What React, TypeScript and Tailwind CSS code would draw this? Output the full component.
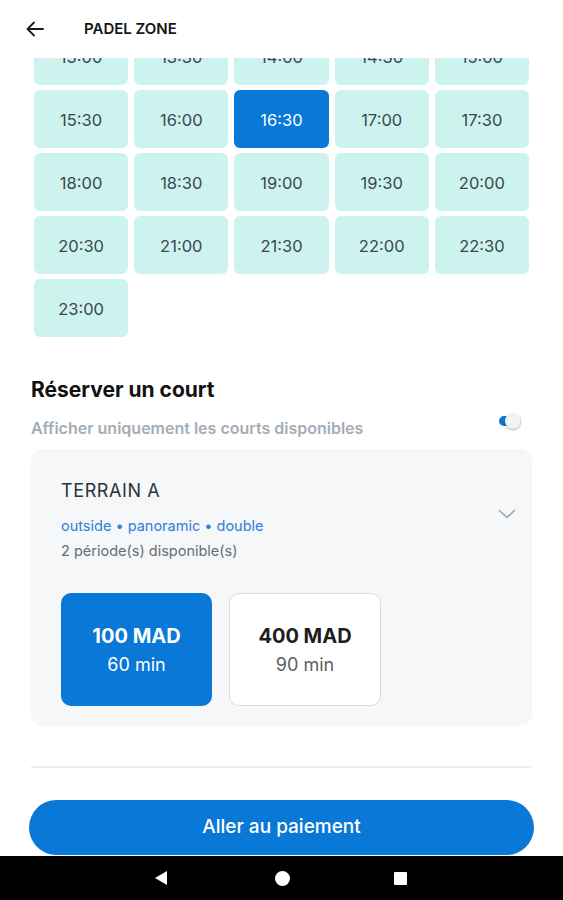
import React from "react";

const times = [
  "13:00", "13:30", "14:00", "14:30", "15:00",
  "15:30", "16:00", "16:30", "17:00", "17:30",
  "18:00", "18:30", "19:00", "19:30", "20:00",
  "20:30", "21:00", "21:30", "22:00", "22:30",
  "23:00",
];

export default function App() {
  return (
    <div
      className="w-[563px] h-[900px] bg-white flex flex-col overflow-hidden"
      style={{ fontFamily: "Inter, 'Noto Sans', sans-serif" }}
    >
      {/* Header */}
      <div className="h-[58px] shrink-0 bg-white flex items-center z-10 relative">
        <div className="w-[84px] pl-[26px] flex items-center">
          <svg width="18" height="16" viewBox="0 0 18 16" fill="none">
            <path d="M8 1.5 1.5 8 8 14.5M1.5 8H17" stroke="#1a1a1a" strokeWidth="1.8" strokeLinecap="round" strokeLinejoin="round" />
          </svg>
        </div>
        <span className="text-[15px] font-semibold text-[#151515]">PADEL ZONE</span>
      </div>

      {/* Main */}
      <div className="flex-1 overflow-hidden">
        <div className="px-[31px] flex flex-col">
          <div className="-mt-[31px] px-[3px] grid grid-cols-5 gap-x-[6px] gap-y-[5px]">
            {times.map((t) => {
              const sel = t === "16:30";
              return (
                <div
                  key={t}
                  className={
                    sel
                      ? "h-[58px] pt-[2px] rounded-[6px] bg-[#0a78d6] flex items-center justify-center text-[16.5px] text-white"
                      : "h-[58px] pt-[2px] rounded-[6px] bg-[#cdf3ef] flex items-center justify-center text-[16.5px] text-[#3c4650]"
                  }
                >
                  {t}
                </div>
              );
            })}
          </div>

          <h2 className="mt-[39px] text-[21px] leading-[28px] font-bold text-[#111]">Réserver un court</h2>

          <div className="mt-[14px] h-[20px] flex items-start justify-between pr-[7px]">
            <span className="text-[16px] leading-[20px] font-semibold text-[#a3adb6]">
              Afficher uniquement les courts disponibles
            </span>
            <div className="-mt-[5px] h-[16px] w-[26px] flex items-center">
              <div className="h-[10px] w-[22px] rounded-full bg-[#0a78d6] flex items-center justify-end -mr-[4px]">
                <div className="h-[16px] w-[16px] rounded-full bg-[#f2f2f2] shadow-[0_1px_2px_rgba(0,0,0,0.3)]" />
              </div>
            </div>
          </div>

          {/* Card */}
          <div className="mt-[11px] rounded-[12px] bg-[#f5f7f9] pt-[30px] pl-[30px] pr-[16px] pb-[20px]">
            <div className="flex items-center justify-between">
              <div className="flex flex-col">
                <span className="text-[18px] leading-[24px] text-[#2c3238] tracking-[0.6px]">TERRAIN A</span>
                <span className="mt-[13px] text-[14.5px] leading-[20px] text-[#2f80d8]">
                  outside • panoramic • double
                </span>
                <span className="mt-[5px] text-[14.5px] leading-[20px] text-[#666d75]">
                  2 période(s) disponible(s)
                </span>
              </div>
              <svg width="18" height="10" viewBox="0 0 18 10" fill="none" className="mb-[12px]">
                <path d="M1.5 1.5 9 8.5l7.5-7" stroke="#9aa8b2" strokeWidth="1.6" strokeLinecap="round" strokeLinejoin="round" />
              </svg>
            </div>

            <div className="mt-[32px] flex gap-[17px]">
              <div className="w-[151px] h-[113px] rounded-[10px] bg-[#0a78d6] flex flex-col items-center justify-center">
                <span className="text-[20px] leading-[28px] font-bold text-white">100 MAD</span>
                <span className="mt-[3px] text-[18px] leading-[24px] text-white">60 min</span>
              </div>
              <div className="w-[152px] h-[113px] rounded-[10px] bg-white border border-[#d8dce0] flex flex-col items-center justify-center">
                <span className="text-[20px] leading-[28px] font-bold text-[#1e1e1e]">400 MAD</span>
                <span className="mt-[3px] text-[18px] leading-[24px] text-[#5a5f65]">90 min</span>
              </div>
            </div>
          </div>

          <div className="mt-[40px] h-[2px] bg-[#eceef1]" />

          <button className="mt-[32px] -mx-[2px] h-[55px] rounded-full bg-[#0a78d6] text-white text-[19px] font-medium flex items-center justify-center">
            Aller au paiement
          </button>
        </div>
      </div>

      {/* Android nav bar */}
      <div className="h-[44px] shrink-0 bg-black flex items-center">
        <div className="w-[563px] flex items-center">
          <div className="w-[154px]" />
          <svg width="14" height="16" viewBox="0 0 14 16">
            <path d="M13 1v14L1 8z" fill="#fff" />
          </svg>
          <div className="w-[107px]" />
          <div className="w-[15px] h-[15px] rounded-full bg-white" />
          <div className="w-[104px]" />
          <div className="w-[13px] h-[13px] rounded-[1px] bg-white" />
        </div>
      </div>
    </div>
  );
}
